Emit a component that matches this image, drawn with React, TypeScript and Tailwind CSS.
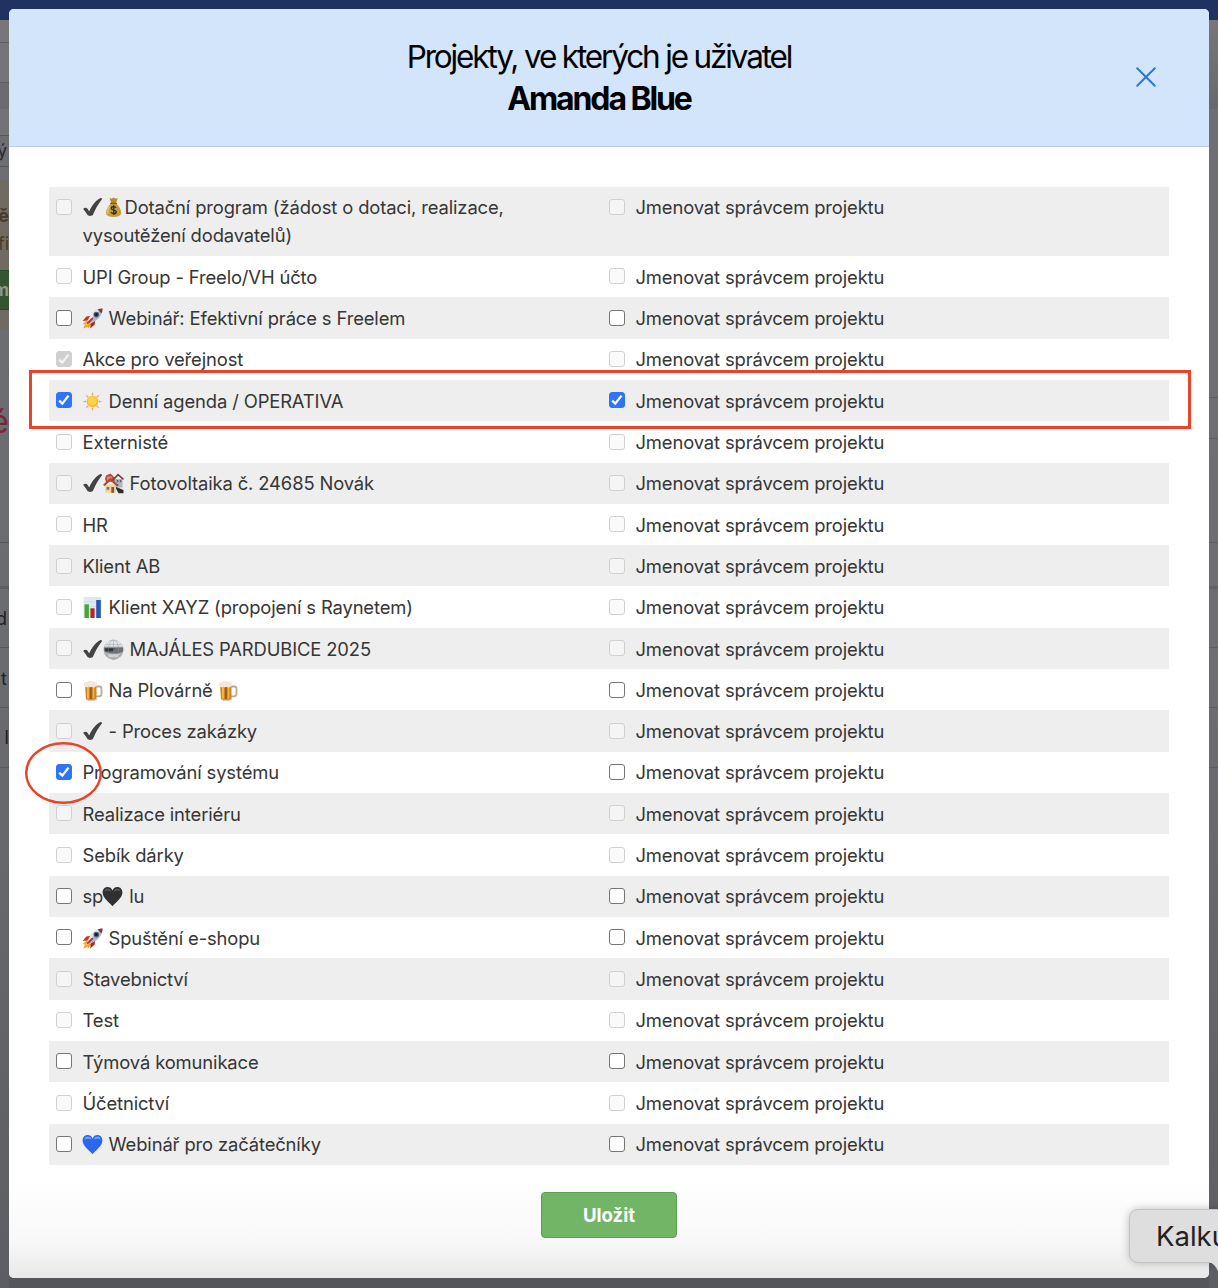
import { useState } from "react";
import type { ReactNode } from "react";

type Project = {
  name: ReactNode;
  member?: boolean;
  manager?: boolean;
  enabled?: boolean;
};

const Glyph = ({ children }: { children: ReactNode }) => (
  <svg
    viewBox="0 0 21 21"
    className="mr-px -ml-px inline-block h-[21px] w-[21px] align-[-4px]"
    aria-hidden="true"
  >
    {children}
  </svg>
);

const HeavyCheck = () => (
  <Glyph>
    <path
      d="M1.500 11.500c1.300-1.300 3.200-1 4.200.4l1.500 2.600C9.800 8.500 13.500 3.600 18.600 1.100c.9-.3 1.900.6 1.200 1.400C16 7.400 13 12.600 11 17.800c-.6 1.300-4.600 1.600-5.400.3-1.200-1.900-2.300-3.700-4-5.600-.3-.4-.4-.7-.1-1z"
      fill="#434343"
    />
  </Glyph>
);

const MoneyBag = () => (
  <Glyph>
    <path d="M6.500.8l2.200 1L10.600.5l1.900 1.300 2.200-1-1.600 5.300H8.200z" fill="#b98a2c" />
    <path
      d="M8.300 6.300h4.600c2.700 2.500 5.200 6 5.200 9.300 0 3-2.200 4.400-7.500 4.400s-7.500-1.400-7.500-4.400c0-3.300 2.500-6.800 5.200-9.300z"
      fill="#c39a3c"
    />
    <path d="M6.500 9.500C5 11.500 4.500 14 5 17" stroke="#e6c873" strokeWidth="1.300" fill="none" />
    <path d="M7.600 6.300h5.800" stroke="#7c5a16" strokeWidth="1.300" strokeLinecap="round" />
    <path
      d="M13 10.800c-.5-.9-1.300-1.200-2.300-1.200-1.400 0-2.400.7-2.400 1.700 0 2.400 5 1.200 5 3.600 0 1.100-1.100 1.800-2.500 1.800-1.300 0-2.200-.5-2.700-1.400M10.700 8.300v9.700"
      fill="none"
      stroke="#2f2a1c"
      strokeWidth="1.300"
    />
  </Glyph>
);

const Rocket = () => (
  <Glyph>
    <path d="M5 12.500L.8 16l2.200.6-1.700 4 4.400-1.900.8 1.600L9.500 16z" fill="#f2a51f" />
    <path d="M5.600 14l-2.300 3.200 3-.9L8 15.500z" fill="#ffe06a" />
    <path d="M8.800 7.800L4.300 8.500.6 12.900l5.200-.5z" fill="#d3301f" />
    <path d="M13.200 12l-.6 4.400-4.300 4.200.4-5.200z" fill="#b3231a" />
    <path d="M20.500.5c-5.200 0-9.800 3.100-12.800 8.300l-2.200 4.300 2.600 2.600 4.500-2.100C17.600 10.500 20.500 6 20.500.5z" fill="#a3bbd2" />
    <path d="M20.500.5c-5.200 0-9.800 3.100-12.800 8.300l-2.200 4.300 1 1C10.300 9 15 4 20.500.5z" fill="#dfeaf4" />
    <path d="M20.500.5c-1.800 0-3.400.3-5 1l4.200 4c.5-1.600.8-3.200.8-5z" fill="#8f3236" />
    <circle cx="14.300" cy="6.600" r="2.800" fill="#51606f" />
    <circle cx="14.300" cy="6.600" r="1.700" fill="#18212b" />
    <path d="M5.800 15.200l4.500-4.500" stroke="#c7281d" strokeWidth="1.800" strokeLinecap="round" />
  </Glyph>
);

const Sun = () => (
  <Glyph>
    <g fill="#e2a763">
      <path d="M10.500.5l.9 3.800H9.600zM10.500 20.500l.9-3.800H9.600zM.5 10.500l3.800.9V9.600zM20.500 10.500l-3.800.9V9.600z" />
      <path d="M3.500 3.500l3.200 1.900-1.300 1.300zM17.500 17.500l-3.200-1.900 1.300-1.300zM3.500 17.500l1.900-3.200 1.300 1.300zM17.500 3.500l-1.900 3.200-1.300-1.300z" />
    </g>
    <circle cx="10.500" cy="10.500" r="5.700" fill="#f3b632" />
    <circle cx="10.300" cy="10" r="4.500" fill="#fcd24a" />
  </Glyph>
);

const Houses = () => (
  <Glyph>
    <path d="M2 6l1-3.500L7.500.5 12 5v4H3z" fill="#b64b3c" />
    <path d="M4 3.500h5v5H4z" fill="#d88b76" />
    <path d="M11.500 6h8v8.500h-8z" fill="#a9b9c5" />
    <path d="M10.300 6.700L15 1.600l5.500 4.700" fill="none" stroke="#7c3b38" strokeWidth="1.600" />
    <path d="M13.800 7h1.500v2.300h-1.500zM16.800 7h1.500v2.300h-1.500zM13.800 11h1.500v2h-1.500z" fill="#4c6377" />
    <path d="M12 13.500l8.500 3.500v3.200h-5z" fill="#302c2a" />
    <path d="M2.300 11.500h10.600v8.300H2.300z" fill="#efd59a" />
    <path d="M.8 12.500L7.400 6.200l7 6.300" fill="none" stroke="#b04536" strokeWidth="2" />
    <path d="M3.600 14h2.600v2.700H3.600z" fill="#58758b" />
    <path d="M8.300 14h2.800v5.800H8.300z" fill="#8d5831" />
  </Glyph>
);

const BarChart = () => (
  <Glyph>
    <path d="M1.500 0h17.800v21H1.500z" fill="#dfe8f0" />
    <path d="M1.500 5h17.800M1.500 9.500h17.800M1.500 14h17.800" stroke="#cbd8e3" strokeWidth=".7" />
    <path d="M2.500 7.300h4.400V21H2.500z" fill="#45a832" />
    <path d="M8.400 11.300h4.200V21H8.400z" fill="#b92620" />
    <path d="M14.200 3h4.600v18h-4.600z" fill="#2458b8" />
  </Glyph>
);

const MirrorBall = () => (
  <Glyph>
    <circle cx="10.500" cy="10.700" r="10" fill="#aeb3b6" />
    <path d="M1.200 7.500a10 10 0 0118.600 0z" fill="#dfe4e7" />
    <path d="M.8 8.500h19.400v4c-4 2.700-13 2.700-18.900 0z" fill="#6b7072" />
    <path d="M2 9.300h10l-2 2.900H2.500z" fill="#303436" />
    <path d="M10.500 1v19M2.500 5.500h16M2.500 16h16" stroke="#8e9699" strokeWidth=".4" />
    <ellipse cx="10.500" cy="10.700" rx="5.200" ry="9.800" fill="none" stroke="#8e9699" strokeWidth=".4" />
    <path d="M4.500 15.300h12l-2 3h-8z" fill="#d0d3d5" />
  </Glyph>
);

const Beer = () => (
  <Glyph>
    <path d="M13.800 6.500h3.400c1.700 0 2.300 1 2.300 2.300v5c0 1.500-.8 2.500-2.500 2.500h-3" fill="none" stroke="#b8aa94" strokeWidth="1.800" />
    <path d="M3 4.500h11.500v15c-2.500 1.200-8 1.200-10.500 0z" fill="#cf8423" />
    <path d="M5 7h1.900v11.500H5zM10.800 7h1.500v11.500h-1.500z" fill="#f2b844" />
    <path d="M8.200 7h1.500v12H8.200z" fill="#96510f" />
    <path d="M2.300 5.500C1.500 3 3.300 1.600 5.200 2c1.500-1.600 4-1.600 5.200-.3 2.300-.8 4.800.3 4.800 2.800 0 1.500-.7 2.300-2 2.200-1.300 1.500-3 .8-3.500 0-1.300.8-2.300.8-3 0-1.700 1-3.800.6-4.400-1.200z" fill="#f0e8da" />
    <path d="M4 19.300c2.500 1.300 8 1.300 10.500 0" fill="none" stroke="#c9c2b6" strokeWidth="1" />
  </Glyph>
);

const Heart = ({ top, fill }: { top: string; fill: string }) => (
  <Glyph>
    <path
      d="M10.500 20.300C7.500 16.300.6 12.500.6 6.600.6 3.300 2.800 1.100 5.600 1.100c2.200 0 4 1.200 4.900 3.300.9-2.100 2.700-3.300 4.900-3.300 2.800 0 5 2.200 5 5.500 0 5.900-6.900 9.700-9.900 13.700z"
      fill={fill}
    />
    <path d="M2.300 5.600c.3-1.800 1.700-3 3.400-3 1.800 0 3 1 3.700 2.800-2-1-5-1-7.100.2zM11.700 5.400c.6-1.800 2-2.800 3.700-2.800 1.700 0 3 1.100 3.400 3-2.200-1.200-5-1.200-7.100-.2z" fill={top} />
  </Glyph>
);

const projects: Project[] = [
  {
    name: (
      <>
        <HeavyCheck />
        <MoneyBag />
        Dotační program (žádost o dotaci, realizace,
        <br />
        vysoutěžení dodavatelů)
      </>
    ),
  },
  { name: "UPI Group - Freelo/VH účto" },
  { name: <><Rocket /> Webinář: Efektivní práce s Freelem</>, enabled: true },
  { name: "Akce pro veřejnost", member: true },
  { name: <><Sun /> Denní agenda / OPERATIVA</>, member: true, manager: true, enabled: true },
  { name: "Externisté" },
  { name: <><HeavyCheck /><Houses /> Fotovoltaika č. 24685 Novák</> },
  { name: "HR" },
  { name: "Klient AB" },
  { name: <><BarChart /> Klient XAYZ (propojení s Raynetem)</> },
  { name: <><HeavyCheck /><MirrorBall /> MAJÁLES PARDUBICE 2025</> },
  { name: <><Beer /> Na Plovárně <Beer /></>, enabled: true },
  { name: <><HeavyCheck /> - Proces zakázky</> },
  { name: "Programování systému", member: true, enabled: true },
  { name: "Realizace interiéru" },
  { name: "Sebík dárky" },
  { name: <>sp<Heart fill="#2f3032" top="#505255" /> lu</>, enabled: true },
  { name: <><Rocket /> Spuštění e-shopu</>, enabled: true },
  { name: "Stavebnictví" },
  { name: "Test" },
  { name: "Týmová komunikace", enabled: true },
  { name: "Účetnictví" },
  { name: <><Heart fill="#2a66ee" top="#6c9dfb" /> Webinář pro začátečníky</>, enabled: true },
];

type CheckboxProps = {
  defaultChecked?: boolean;
  disabled?: boolean;
  children: ReactNode;
};

const Checkbox = ({ defaultChecked = false, disabled, children }: CheckboxProps) => {
  const [checked, setChecked] = useState(defaultChecked);

  return (
    <label className="flex items-start">
      <span className="mt-[4.700px] mr-[10.500px] grid h-4 w-4 shrink-0">
        <input
          type="checkbox"
          checked={checked}
          disabled={disabled}
          onChange={() => setChecked(!checked)}
          className="col-start-1 row-start-1 h-4 w-4 appearance-none rounded-[3px] border border-[#767676] bg-white checked:border-[#2f74f6] checked:bg-[#2f74f6] disabled:border-[#d0d0d0] disabled:bg-[#f8f8f8]/70 disabled:checked:bg-[#d0d0d0]"
        />
        {checked && (
          <svg viewBox="0 0 16 16" className="pointer-events-none col-start-1 row-start-1 h-4 w-4">
            <path
              d="M3.200 8.600l3.100 3 6.200-8"
              fill="none"
              stroke={disabled ? "#f3f3f3" : "#fff"}
              strokeWidth="2.300"
            />
          </svg>
        )}
      </span>
      <span>{children}</span>
    </label>
  );
};

const ProjectRow = ({ project }: { project: Project }) => (
  <li className="flex pt-[7.730px] pb-[5.940px] pl-[7px] first:pt-[7.400px] first:pb-[6.270px] odd:bg-[#eeeeee]">
    <div className="w-[553px]">
      <Checkbox defaultChecked={project.member} disabled={!project.enabled}>
        {project.name}
      </Checkbox>
    </div>
    <Checkbox defaultChecked={project.manager} disabled={!project.enabled}>
      Jmenovat správcem projektu
    </Checkbox>
  </li>
);

// Dimmed page that stays visible round the dialog
const PageBehind = () => (
  <div className="col-start-1 row-start-1 flex h-[1288px] flex-col overflow-hidden bg-[#55565c]">
    <div className="h-5 shrink-0 bg-[#1f3260]" />
    <div className="flex grow justify-between">
      <div className="flex w-[9px] flex-col overflow-hidden whitespace-nowrap bg-linear-to-b from-[#6d6e73] via-[#6b6c72] to-[#5d5e64]">
        <div className="h-[23px] border-b border-[#5c5c60] bg-[#77777a]" />
        <div className="h-[40px] border-b border-[#5c5c60] bg-[#757578]" />
        <div className="h-[26px] bg-[#6b6b70]" />
        <div className="h-[27px] border-b border-[#55565b] bg-[#727277]" />
        <div className="flex h-[31px] items-center justify-end border-b border-[#55565b] pt-0.5 pr-0.5 text-[17px] text-[#25262a]">ý</div>
        <div className="h-[13px]" />
        <div className="flex h-[90px] flex-col items-end bg-[#6f6b63] pt-[22px] text-[18px] leading-7 text-[#4a3c26]">
          <b>rě</b>
          <span>fi</span>
        </div>
        <div className="flex h-10 items-center justify-end border-y border-[#28482a] bg-[#335532] pt-0.5 text-[17px] font-bold text-[#8f9a90]">m</div>
        <div className="h-5 bg-[#6f6b63]" />
        <div className="flex h-[213px] items-center justify-end border-b border-[#56575d] pb-7 text-[32px] text-[#7a2734]">é</div>
        <div className="h-[43px]" />
        <div className="h-[3px] bg-[#5d5e64]" />
        <div className="flex h-[59px] items-center justify-end border-b border-[#56575d] pr-0.5 text-[18px] text-[#1f2024]">d</div>
        <div className="flex h-[60px] items-center justify-end border-b border-[#56575d] pt-0.5 pr-0.5 text-[18px] text-[#1f2024]">t</div>
        <div className="flex h-[60px] items-center justify-end border-b border-[#56575d] text-[18px] text-[#1f2024]">I</div>
      </div>
      <div className="flex w-[9px] flex-col bg-linear-to-b from-[#6e6f74] via-[#6d6e74] to-[#5d5e64]">
        <div className="h-[89px] bg-linear-to-b from-[#77777a] to-[#68696e]" />
        <div className="h-[289px] border-b border-[#5c5d63]" />
        <div className="h-[41px] border-b border-[#5c5d63]" />
        <div className="h-[104px] border-b border-[#5c5d63]" />
        <div className="h-[43px]" />
        <div className="h-[3px] bg-[#606167]" />
        <div className="h-[59px] border-b border-[#5c5d63]" />
        <div className="h-[60px] border-b border-[#5c5d63]" />
        <div className="h-[60px] border-b border-[#5c5d63]" />
      </div>
    </div>
  </div>
);

const App = () => {
  return (
    <div className="relative grid h-[1288px] w-[1218px] overflow-hidden font-['Inter',sans-serif]">
      <PageBehind />

      <div className="z-10 col-start-1 row-start-1 mx-[9px] mt-[9px] mb-[10px] flex flex-col overflow-hidden rounded-[5px] bg-white">
        <header className="flex h-[138px] items-center justify-between border-b border-[#b9cde2] bg-[#d3e5fb] pr-[52px] pl-[54px]">
          <h2 className="grow pt-px text-center text-[31.500px] leading-[42px] tracking-[-2.150px] text-black">
            Projekty, ve kterých je uživatel
            <br />
            <strong className="text-[32px] font-bold tracking-[-2.100px]">Amanda Blue</strong>
          </h2>
          <button aria-label="Zavřít" className="pb-px">
            <svg viewBox="0 0 22 22" className="h-[22px] w-[22px]">
              <path d="M2.200 2.200l17.600 17.600M19.800 2.200L2.200 19.800" stroke="#2f76d2" strokeWidth="2" strokeLinecap="round" />
            </svg>
          </button>
        </header>

        <div className="flex grow flex-col items-center bg-[linear-gradient(to_bottom,#fff_0,#fff_1035px,#f8f8f8_1095px,#e8e8e8_1131px)] px-10 pt-10">
          <ul className="w-full text-[18.400px] leading-[27.660px] tracking-[-0.130px] text-[#363636]">
            {projects.map((project, i) => (
              <ProjectRow key={i} project={project} />
            ))}
          </ul>
          <button className="mt-[27px] h-[46px] w-[136px] rounded-[4px] border border-[#5b9f50] bg-[#73b567] pt-0.5 text-[18.600px] font-bold text-white">
            Uložit
          </button>
        </div>
      </div>

      {/* Highlights over the rows */}
      <div className="absolute top-[370px] left-[29px] z-20 h-[59px] w-[1162px] border-3 border-[#e9442a]" />
      <svg viewBox="0 0 80 64" className="absolute top-[741px] left-[24px] z-20 h-[64px] w-[80px]">
        <ellipse cx="39.500" cy="32" rx="37.300" ry="29.700" fill="none" stroke="#e9442a" strokeWidth="2.500" />
      </svg>

      <div className="absolute top-[1209px] left-[1129px] z-30 flex h-[54px] w-[140px] items-center rounded-[9px] border border-[#c4c4c4] bg-[#dedede] pt-0.5 pl-[26px] text-[27.500px] text-[#222] shadow-[0_0_8px_rgba(0,0,0,0.25)]">
        Kalku
      </div>
      <svg viewBox="0 0 9 10" className="absolute top-[1262px] left-[1209px] z-30 h-[10px] w-[9px]">
        <path d="M0 0h9v9.500C7 4 4 1.500 0 0z" fill="#dedede" />
      </svg>
    </div>
  );
};

export default App;
